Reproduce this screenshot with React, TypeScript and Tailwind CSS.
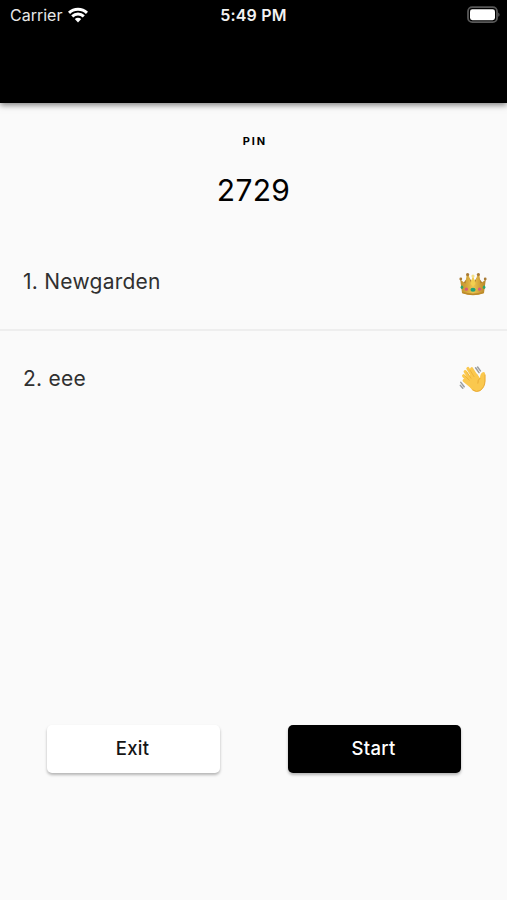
import type { ReactNode } from 'react'

type Player = {
  id: number
  name: string
  icon: ReactNode
}

function WifiIcon() {
  return (
    <svg width="20" height="16" viewBox="0 0 20 16" fill="none" stroke="white" strokeWidth="3">
      <path d="M1 5.8C6 1 14 1 19 5.8" />
      <path d="M4.2 9.4C7.6 6.2 12.4 6.2 15.8 9.4" />
      <path d="M6.8 12.1Q10 9.6 13.2 12.1L10 15.4Z" fill="white" stroke="none" />
    </svg>
  )
}

function BatteryIcon() {
  return (
    <svg width="33" height="18" viewBox="0 0 33 18">
      <rect x="1" y="1.2" width="29" height="15" rx="4.2" fill="none" stroke="#585858" strokeWidth="1.8" />
      <rect x="3" y="3.2" width="25" height="11" rx="2.4" fill="white" />
      <path d="M31.2 6.6Q32.6 7.3 32.6 8.7Q32.6 10.1 31.2 10.8Z" fill="#585858" />
    </svg>
  )
}

function CrownIcon() {
  return (
    <svg width="28" height="28" viewBox="0 0 28 28">
      <defs>
        <linearGradient id="gold" x1="0" y1="0" x2="1" y2="0">
          <stop offset="0" stopColor="#c0912f" />
          <stop offset="0.3" stopColor="#d9ab3d" />
          <stop offset="0.5" stopColor="#edc653" />
          <stop offset="0.75" stopColor="#d3a338" />
          <stop offset="1" stopColor="#b5852a" />
        </linearGradient>
      </defs>
      <g transform="translate(0 1)">
        <path d="M3.6 14L9.3 6.5L14 13L18.7 6.5L24.4 14V20H3.6Z" fill="#a97b2b" />
        <path d="M1.2 9.6L6.4 13.6L7.6 5.2L9.8 5.2L11.6 12L14 6.4L16.4 12L18.2 5.2L20.4 5.2L21.6 13.6L26.8 9.6L25 23Q14 27 3 23Z" fill="url(#gold)" />
        <path d="M11.5 14L14 6.5L16.5 14L14 16.5Z" fill="#f3cf4f" />
        <path d="M3 21.4Q14 25.4 25 21.4L24.8 23.2Q14 27.2 3.2 23.2Z" fill="#bd8b2b" />
        <circle cx="1.8" cy="9" r="1.4" fill="#a87a35" />
        <circle cx="8.6" cy="4.6" r="1.6" fill="#a87a35" />
        <circle cx="14" cy="6" r="1.6" fill="#f4df86" />
        <circle cx="19.4" cy="4.6" r="1.6" fill="#a87a35" />
        <circle cx="26.2" cy="9" r="1.4" fill="#a87a35" />
        <ellipse cx="2.9" cy="17.2" rx="1.3" ry="1.7" fill="#2ba56c" />
        <circle cx="7.4" cy="19.2" r="1.6" fill="#d8587c" />
        <ellipse cx="14" cy="19.8" rx="2.6" ry="2" fill="#20a278" />
        <circle cx="20.6" cy="19.2" r="1.6" fill="#d8587c" />
        <ellipse cx="25.1" cy="17.2" rx="1.3" ry="1.7" fill="#2ba56c" />
      </g>
    </svg>
  )
}

function WaveIcon() {
  return (
    <svg width="28" height="28" viewBox="0 1 28 28" fill="none" strokeLinecap="round">
      <path d="M9.2 17.5L11 10L18 8.8L21 13.2Q21 9 23.2 7.5Q26 6 26.2 9.5V16Q26 22.5 21 26Q17.6 28 13.5 25.2Q11 23.5 9.2 17.5Z" fill="#fac84e" />
      <path d="M11.6 14.8L6.2 6.7M14.6 12.8L8.9 3.5M17.6 11.6L12.7 3.8M12.2 19L4.6 10.8M14 22.8L5.2 15.5" stroke="#fac84e" strokeWidth="3.2" />
      <path d="M12 13.3L7.9 7M15 11.6L11 5.1M10.2 15.3L6.2 11" stroke="#e6a52f" strokeWidth="0.6" />
      <path d="M26 10V16Q25.8 22.3 21 25.6Q17.5 27.7 13.8 25" stroke="#e9a936" strokeWidth="1" />
      <path d="M21 13.2Q18.5 14.6 18.8 18.2" stroke="#e6a52f" strokeWidth="0.8" />
      <g stroke="#9a9da0" strokeWidth="1.5">
        <path d="M16.6 2.8L20 7.6M18.6 2L21.4 5.9M1.8 17.4L5.2 21.8M1.4 20.4L3.8 23.2" />
      </g>
    </svg>
  )
}

const PLAYERS: Player[] = [
  { id: 1, name: 'Newgarden', icon: <CrownIcon /> },
  { id: 2, name: 'eee', icon: <WaveIcon /> },
]

function StatusBar() {
  return (
    <div className="grid h-[30px] grid-cols-3 items-center pr-[7px] pl-2.5 text-white">
      <div className="flex items-center gap-1.5 text-[16px] text-[#e8e8e8]">
        <span>Carrier</span>
        <WifiIcon />
      </div>
      <div className="pr-[3px] text-center text-[16px] font-semibold tracking-[0.2px] whitespace-nowrap text-[#f2f2f2]">5:49 PM</div>
      <div className="flex justify-end">
        <BatteryIcon />
      </div>
    </div>
  )
}

export default function App() {
  return (
    <div className="flex h-[900px] w-[507px] flex-col overflow-hidden bg-[#fafafa] font-['Inter','Liberation_Sans',sans-serif]">
      <header className="h-[103px] shrink-0 bg-black shadow-[0_2px_6px_rgba(0,0,0,0.5)]">
        <StatusBar />
      </header>

      <section className="flex h-[131px] shrink-0 flex-col items-center pt-[30px] text-black">
        <div className="pl-[3px] text-[11px] leading-4 font-bold tracking-[1.9px]">PIN</div>
        <div className="mt-[21px] text-[30px] leading-10 tracking-[0.3px]">2729</div>
      </section>

      {/* Players */}
      <ul className="text-[#303030]">
        {PLAYERS.map(p => (
          <li
            key={p.id}
            className="flex h-[97px] items-center justify-between border-b-2 border-[#eeeeee] pr-5 pl-[23px] last:h-24 last:border-b-0"
          >
            <span className="text-[21px] tracking-[0.25px]">{p.id}. {p.name}</span>
            <span className="pt-0.5">{p.icon}</span>
          </li>
        ))}
      </ul>

      <footer className="mt-auto mb-[127px] flex justify-between pr-[46px] pl-[47px] text-[18.5px] font-medium tracking-[0.25px]">
        <button className="h-12 w-[173px] rounded-[5px] bg-white pr-0.5 text-[#151515] shadow-[0_2px_3px_rgba(0,0,0,0.28)]">
          Exit
        </button>
        <button className="h-12 w-[173px] rounded-[5px] bg-black pr-0.5 text-white shadow-[0_2px_3px_rgba(0,0,0,0.28)]">
          Start
        </button>
      </footer>
    </div>
  )
}
